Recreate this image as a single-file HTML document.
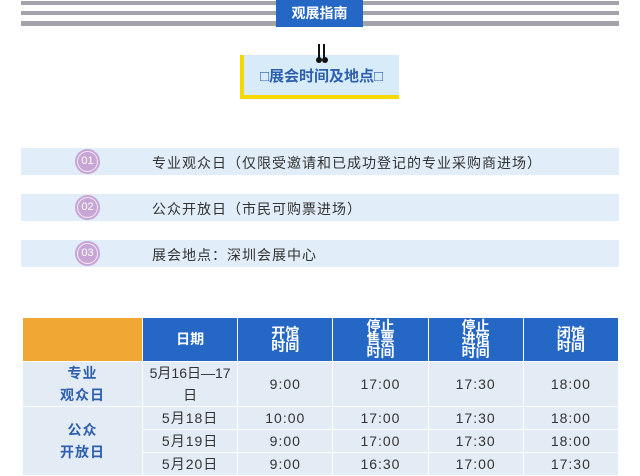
<!DOCTYPE html><html><head><meta charset="utf-8"><style>
body{margin:0;width:640px;height:476px;background:#fff;position:relative;overflow:hidden;font-family:"Liberation Sans","Noto Sans CJK SC",sans-serif}
.s{position:absolute;left:21px;width:598px;background:#a3a3ab}
.a{position:absolute}
.row{position:absolute;left:21px;width:598px;height:27px;background:#e1edf8}
.c{position:absolute;left:54px;top:1px;width:25px;height:25px;border-radius:50%;background:#c7a6d6;color:#fff;font-size:11px;line-height:25px;text-align:center;box-shadow:inset 0 0 0 2px #c7a6d6,inset 0 0 0 3px #f2e6f7}
.t{position:absolute;left:131px;top:5px;font-size:14px;color:#333;letter-spacing:1px}
table{position:absolute;left:22px;top:317px;border-collapse:collapse;width:597px;table-layout:fixed}
td{border:1px solid #fff;text-align:center;font-size:14px;color:#333;background:#e3ebf5;padding:0;line-height:22px;letter-spacing:1px}
th{border:1px solid #fff;background:#2467c5;color:#fff;font-size:14px;font-weight:bold;line-height:13px;height:43px;padding:0}
td.h{color:#2c5fae;font-weight:bold;line-height:22px}
</style></head><body>
<div class="s" style="top:1px;height:4px"></div>
<div class="s" style="top:11px;height:4px"></div>
<div class="s" style="top:21px;height:5px"></div>
<div class="a" style="left:276px;top:0;width:87px;height:27px;background:#2467c5;color:#fff;font-weight:bold;font-size:14px;line-height:26px;text-align:center">观展指南</div>
<div class="a" style="left:240px;top:55px;width:155px;height:40px;background:#d7ebf9;border-left:4px solid #f5d800;border-bottom:4px solid #f5d800;color:#2c5fae;font-size:15px;font-weight:bold;text-align:center;line-height:44px">□展会时间及地点□</div>
<div class="a" style="left:318px;top:44px;width:2px;height:16px;background:#111"></div>
<div class="a" style="left:323px;top:44px;width:2px;height:16px;background:#111"></div>
<div class="a" style="left:316px;top:57px;width:6px;height:6px;border-radius:50%;background:#111"></div>
<div class="a" style="left:322px;top:57px;width:6px;height:6px;border-radius:50%;background:#111"></div>
<div class="row" style="top:148px"><div class="c">01</div><div class="t">专业观众日（仅限受邀请和已成功登记的专业采购商进场）</div></div>
<div class="row" style="top:194px"><div class="c">02</div><div class="t">公众开放日（市民可购票进场）</div></div>
<div class="row" style="top:240px"><div class="c">03</div><div class="t">展会地点：深圳会展中心</div></div>
<table>
<tr><th style="background:#f1a733;width:119px"></th><th>日期</th><th>开馆<br>时间</th><th>停止<br>售票<br>时间</th><th>停止<br>进馆<br>时间</th><th>闭馆<br>时间</th></tr>
<tr><td class="h" style="height:43px">专业<br>观众日</td><td style="letter-spacing:0">5月16日—17<br>日</td><td>9:00</td><td>17:00</td><td>17:30</td><td>18:00</td></tr>
<tr><td class="h" rowspan="3">公众<br>开放日</td><td>5月18日</td><td>10:00</td><td>17:00</td><td>17:30</td><td>18:00</td></tr>
<tr><td>5月19日</td><td>9:00</td><td>17:00</td><td>17:30</td><td>18:00</td></tr>
<tr><td>5月20日</td><td>9:00</td><td>16:30</td><td>17:00</td><td>17:30</td></tr>
</table>
</body></html>
